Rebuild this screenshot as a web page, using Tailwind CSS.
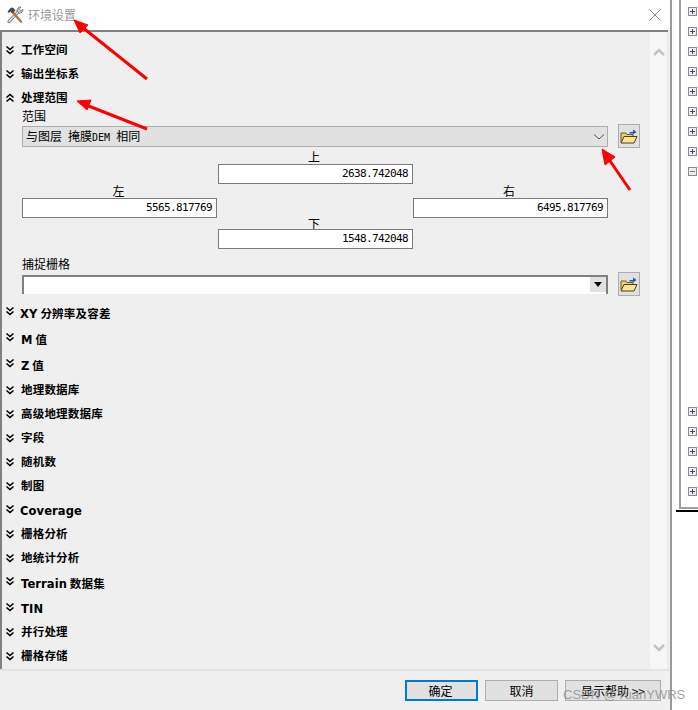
<!DOCTYPE html>
<html>
<head>
<meta charset="utf-8">
<script src="https://cdn.jsdelivr.net/npm/@tailwindcss/browser@4"></script>
</head>
<body class="bg-white">
<div class="relative flex w-[698px] h-[710px] overflow-hidden bg-white text-black text-[12px] font-['Noto_Sans_CJK_SC',sans-serif]">

  <!-- dialog -->
  <div class="flex flex-col w-[672px] h-[710px] border-r-2 border-[#9a9a9a] bg-[#f0f0f0]">
    <div class="flex items-center h-[30px] shrink-0 bg-white pl-[6px] pr-[9px]">
      <svg width="18" height="18" viewBox="0 0 18 18">
        <path d="M3 15.5 L12.5 5.5" stroke="#777" stroke-width="3.2" stroke-linecap="round"/>
        <path d="M3 15.5 L12.5 5.5" stroke="#e4e4e4" stroke-width="1.4" stroke-linecap="round"/>
        <path d="M11 5 A3.6 3.6 0 0 1 15 1 L13.2 3.4 L14.8 5 L17 3.2 A3.6 3.6 0 0 1 13 7.2 Z" fill="#cfcfcf" stroke="#666" stroke-width=".8"/>
        <path d="M6 5.5 L15 15.5" stroke="#b5763a" stroke-width="2.6" stroke-linecap="round"/>
        <path d="M1.5 5.5 L5 1.5 L7.5 2 L9.5 4.5 L6.5 7.5 L4.5 5.5 L3 7 Z" fill="#4a4a4a"/>
      </svg>
      <span class="ml-[4px] text-[#9a9a9a]">环境设置</span>
      <svg class="ml-auto" width="12" height="12" viewBox="0 0 12 12"><path d="M.5 .5 L11.5 11.5 M11.5 .5 L.5 11.5" stroke="#8a8a8a" stroke-width="1"/></svg>
    </div>

    <div class="flex flex-1 min-h-0 h-[638px] border-t-2 border-l-2 border-[#808080] border-b-0 mr-[2px] bg-[#efefef]">
      <div class="w-[648px] pt-[5px] pl-[3px]">
        <div class="flex items-center h-[24px] pt-[2px] gap-[5px] font-bold text-[11.5px] tracking-[.2px]"><svg width="10" height="10" viewBox="0 0 10 10"><path d="M1.5 1.5 L5 4.5 L8.5 1.5 M1.5 5.5 L5 8.5 L8.5 5.5" fill="none" stroke="#000" stroke-width="1.6"/></svg><span class="ml-[1px]">工作空间</span></div>
        <div class="flex items-center h-[24px] pt-[2px] gap-[5px] font-bold text-[11.5px] tracking-[.2px]"><svg width="10" height="10" viewBox="0 0 10 10"><path d="M1.5 1.5 L5 4.5 L8.5 1.5 M1.5 5.5 L5 8.5 L8.5 5.5" fill="none" stroke="#000" stroke-width="1.6"/></svg><span class="ml-[1px]">输出坐标系</span></div>
        <div class="flex items-center h-[24px] pt-[2px] gap-[5px] font-bold text-[11.5px] tracking-[.2px]"><svg width="10" height="10" viewBox="0 0 10 10"><path d="M1.5 4.5 L5 1.5 L8.5 4.5 M1.5 8.5 L5 5.5 L8.5 8.5" fill="none" stroke="#000" stroke-width="1.6"/></svg><span class="ml-[1px]">处理范围</span></div>

        <div class="pl-[17px]">
          <div class="h-[15px] leading-[13px]">范围</div>
          <div class="flex mt-[2px] h-[21px]">
            <div class="flex items-center justify-between w-[586px] h-[21px] border border-[#adadad] bg-[#e1e1e1] pb-[2px] pl-[3px] pr-[2px]">
              <span>与图层<span class="font-['DejaVu_Sans_Mono',monospace] text-[10px]">&nbsp;</span>掩膜<span class="font-['DejaVu_Sans_Mono',monospace] text-[10px]">DEM&nbsp;</span>相同</span>
              <svg class="mt-[2px]" width="12" height="8" viewBox="0 0 12 8"><path d="M1 1.5 L6 6 L11 1.5" fill="none" stroke="#555" stroke-width="1"/></svg>
            </div>
            <div class="flex items-center justify-center w-[22px] h-[24px] -mt-[2px] ml-[10px] border border-[#adadad] bg-[#e1e1e1]">
              <svg width="18" height="16" viewBox="0 0 18 16"><path d="M1 14 V5 H6 L7 6.5 H13 V8" fill="#e8cf7a" stroke="#6b5a22"/><path d="M1 15 L4 8.5 H17 L14 15 Z" fill="#f8e59a" stroke="#4f3f12"/><path d="M9.5 4 H13 V1.5 L16.5 4 L13 6.5 V5.5 H9.5 Z" fill="#1c5aa8"/></svg>
            </div>
          </div>

          <div class="grid grid-cols-[196px_195px_195px] mt-[3px]">
            <div></div>
            <div class="h-[14px] leading-[14px] text-center pr-[3px]">上</div>
            <div></div>
            <div></div>
            <div class="flex items-center justify-end w-[195px] h-[20px] border border-[#7a7a7a] bg-white pr-[4px] font-['DejaVu_Sans_Mono',monospace] text-[11px] tracking-[-.62px]">2638.742048</div>
            <div></div>
            <div class="h-[14px] leading-[14px] text-center pr-[3px]">左</div>
            <div></div>
            <div class="h-[14px] leading-[14px] text-center pr-[3px]">右</div>
            <div class="flex items-center justify-end w-[195px] h-[20px] border border-[#7a7a7a] bg-white pr-[4px] font-['DejaVu_Sans_Mono',monospace] text-[11px] tracking-[-.62px]">5565.817769</div>
            <div></div>
            <div class="flex items-center justify-end w-[195px] h-[20px] border border-[#7a7a7a] bg-white pr-[4px] font-['DejaVu_Sans_Mono',monospace] text-[11px] tracking-[-.62px]">6495.817769</div>
            <div></div>
            <div class="h-[11px] leading-[11px] text-center pr-[3px]">下</div>
            <div></div>
            <div></div>
            <div class="flex items-center justify-end w-[195px] h-[20px] border border-[#7a7a7a] bg-white pr-[4px] font-['DejaVu_Sans_Mono',monospace] text-[11px] tracking-[-.62px]">1548.742048</div>
            <div></div>
          </div>

          <div class="h-[14px] leading-[14px] mt-[8px]">捕捉栅格</div>
          <div class="flex mt-[4px] h-[20px]">
            <div class="flex justify-end w-[586px] h-[19px] border-t-2 border-l-2 border-r-2 border-[#808080] bg-white">
              <div class="flex items-center justify-center w-[16px] h-[15px] bg-[#e1e1e1]">
                <svg width="8" height="5" viewBox="0 0 8 5"><path d="M0 0 H8 L4 5 Z" fill="#000"/></svg>
              </div>
            </div>
            <div class="flex items-center justify-center w-[22px] h-[24px] -mt-[3px] ml-[10px] border border-[#adadad] bg-[#e1e1e1]">
              <svg width="18" height="16" viewBox="0 0 18 16"><path d="M1 14 V5 H6 L7 6.5 H13 V8" fill="#e8cf7a" stroke="#6b5a22"/><path d="M1 15 L4 8.5 H17 L14 15 Z" fill="#f8e59a" stroke="#4f3f12"/><path d="M9.5 4 H13 V1.5 L16.5 4 L13 6.5 V5.5 H9.5 Z" fill="#1c5aa8"/></svg>
            </div>
          </div>
        </div>

        <div class="flex items-start h-[26px] gap-[5px] mt-[4px] pt-[2px] leading-[24px] font-bold text-[11.5px] tracking-[.2px]"><svg class="mt-[5px]" width="10" height="10" viewBox="0 0 10 10"><path d="M1.5 1.5 L5 4.5 L8.5 1.5 M1.5 5.5 L5 8.5 L8.5 5.5" fill="none" stroke="#000" stroke-width="1.6"/></svg><span><span class="font-['DejaVu_Sans',sans-serif]">XY</span> 分辨率及容差</span></div>
        <div class="flex items-start h-[26px] gap-[5px] pt-[2px] leading-[24px] font-bold text-[11.5px] tracking-[.2px]"><svg class="mt-[5px]" width="10" height="10" viewBox="0 0 10 10"><path d="M1.5 1.5 L5 4.5 L8.5 1.5 M1.5 5.5 L5 8.5 L8.5 5.5" fill="none" stroke="#000" stroke-width="1.6"/></svg><span class="ml-[1px]"><span class="font-['DejaVu_Sans',sans-serif]">M</span> 值</span></div>
        <div class="flex items-start h-[26px] gap-[5px] pt-[2px] leading-[24px] font-bold text-[11.5px] tracking-[.2px]"><svg class="mt-[5px]" width="10" height="10" viewBox="0 0 10 10"><path d="M1.5 1.5 L5 4.5 L8.5 1.5 M1.5 5.5 L5 8.5 L8.5 5.5" fill="none" stroke="#000" stroke-width="1.6"/></svg><span class="ml-[1px]"><span class="font-['DejaVu_Sans',sans-serif]">Z</span> 值</span></div>
        <div class="flex items-center h-[24px] pt-[2px] gap-[5px] font-bold text-[11.5px] tracking-[.2px]"><svg width="10" height="10" viewBox="0 0 10 10"><path d="M1.5 1.5 L5 4.5 L8.5 1.5 M1.5 5.5 L5 8.5 L8.5 5.5" fill="none" stroke="#000" stroke-width="1.6"/></svg><span class="ml-[1px]">地理数据库</span></div>
        <div class="flex items-center h-[24px] pt-[2px] gap-[5px] font-bold text-[11.5px] tracking-[.2px]"><svg width="10" height="10" viewBox="0 0 10 10"><path d="M1.5 1.5 L5 4.5 L8.5 1.5 M1.5 5.5 L5 8.5 L8.5 5.5" fill="none" stroke="#000" stroke-width="1.6"/></svg><span class="ml-[1px]">高级地理数据库</span></div>
        <div class="flex items-center h-[24px] pt-[2px] gap-[5px] font-bold text-[11.5px] tracking-[.2px]"><svg width="10" height="10" viewBox="0 0 10 10"><path d="M1.5 1.5 L5 4.5 L8.5 1.5 M1.5 5.5 L5 8.5 L8.5 5.5" fill="none" stroke="#000" stroke-width="1.6"/></svg><span class="ml-[1px]">字段</span></div>
        <div class="flex items-center h-[24px] pt-[2px] gap-[5px] font-bold text-[11.5px] tracking-[.2px]"><svg width="10" height="10" viewBox="0 0 10 10"><path d="M1.5 1.5 L5 4.5 L8.5 1.5 M1.5 5.5 L5 8.5 L8.5 5.5" fill="none" stroke="#000" stroke-width="1.6"/></svg><span class="ml-[1px]">随机数</span></div>
        <div class="flex items-center h-[24px] pt-[2px] gap-[5px] font-bold text-[11.5px] tracking-[.2px]"><svg width="10" height="10" viewBox="0 0 10 10"><path d="M1.5 1.5 L5 4.5 L8.5 1.5 M1.5 5.5 L5 8.5 L8.5 5.5" fill="none" stroke="#000" stroke-width="1.6"/></svg><span class="ml-[1px]">制图</span></div>
        <div class="flex items-start h-[24px] gap-[5px] pt-[2px] leading-[24px] font-bold text-[11.5px] tracking-[.2px]"><svg class="mt-[5px]" width="10" height="10" viewBox="0 0 10 10"><path d="M1.5 1.5 L5 4.5 L8.5 1.5 M1.5 5.5 L5 8.5 L8.5 5.5" fill="none" stroke="#000" stroke-width="1.6"/></svg><span class="font-['DejaVu_Sans',sans-serif] text-[11.5px] tracking-[.1px]">Coverage</span></div>
        <div class="flex items-center h-[24px] pt-[2px] gap-[5px] font-bold text-[11.5px] tracking-[.2px]"><svg width="10" height="10" viewBox="0 0 10 10"><path d="M1.5 1.5 L5 4.5 L8.5 1.5 M1.5 5.5 L5 8.5 L8.5 5.5" fill="none" stroke="#000" stroke-width="1.6"/></svg><span class="ml-[1px]">栅格分析</span></div>
        <div class="flex items-center h-[24px] pt-[2px] gap-[5px] font-bold text-[11.5px] tracking-[.2px]"><svg width="10" height="10" viewBox="0 0 10 10"><path d="M1.5 1.5 L5 4.5 L8.5 1.5 M1.5 5.5 L5 8.5 L8.5 5.5" fill="none" stroke="#000" stroke-width="1.6"/></svg><span class="ml-[1px]">地统计分析</span></div>
        <div class="flex items-start h-[26px] gap-[5px] pt-[2px] leading-[24px] font-bold text-[11.5px] tracking-[.2px]"><svg class="mt-[5px]" width="10" height="10" viewBox="0 0 10 10"><path d="M1.5 1.5 L5 4.5 L8.5 1.5 M1.5 5.5 L5 8.5 L8.5 5.5" fill="none" stroke="#000" stroke-width="1.6"/></svg><span class="ml-[1px]"><span class="font-['DejaVu_Sans',sans-serif] tracking-[.1px]">Terrain</span> 数据集</span></div>
        <div class="flex items-start h-[24px] gap-[5px] pt-[2px] leading-[24px] font-bold text-[11.5px] tracking-[.2px]"><svg class="mt-[5px]" width="10" height="10" viewBox="0 0 10 10"><path d="M1.5 1.5 L5 4.5 L8.5 1.5 M1.5 5.5 L5 8.5 L8.5 5.5" fill="none" stroke="#000" stroke-width="1.6"/></svg><span class="ml-[1px] font-['DejaVu_Sans',sans-serif]">TIN</span></div>
        <div class="flex items-center h-[24px] pt-[2px] gap-[5px] font-bold text-[11.5px] tracking-[.2px]"><svg width="10" height="10" viewBox="0 0 10 10"><path d="M1.5 1.5 L5 4.5 L8.5 1.5 M1.5 5.5 L5 8.5 L8.5 5.5" fill="none" stroke="#000" stroke-width="1.6"/></svg><span class="ml-[1px]">并行处理</span></div>
        <div class="flex items-center h-[24px] pt-[2px] gap-[5px] font-bold text-[11.5px] tracking-[.2px]"><svg width="10" height="10" viewBox="0 0 10 10"><path d="M1.5 1.5 L5 4.5 L8.5 1.5 M1.5 5.5 L5 8.5 L8.5 5.5" fill="none" stroke="#000" stroke-width="1.6"/></svg><span class="ml-[1px]">栅格存储</span></div>
      </div>

      <!-- scrollbar -->
      <div class="flex flex-col justify-between w-[18px] pt-[16px] pb-[17px] items-center bg-[#f7f7f7] border-r border-[#e6e6e6]">
        <svg width="12" height="8" viewBox="0 0 12 8"><path d="M1 7 L6 2 L11 7" fill="none" stroke="#c4c4c4" stroke-width="2.6"/></svg>
        <svg width="12" height="8" viewBox="0 0 12 8"><path d="M1 1 L6 6 L11 1" fill="none" stroke="#c4c4c4" stroke-width="2.6"/></svg>
      </div>
    </div>

    <div class="flex items-start justify-end h-[41px] shrink-0 border-t-2 border-[#e4e4e4] bg-[#f0f0f0] pt-[9px] pr-[9px] gap-[7px]">
      <button class="w-[73px] h-[21px] border-2 border-[#0078d7] bg-[#e1e1e1] leading-none pr-[2px]">确定</button>
      <button class="w-[73px] h-[21px] border border-[#adadad] bg-[#e1e1e1] leading-none">取消</button>
      <button class="w-[96px] h-[21px] border border-[#adadad] bg-[#e1e1e1] leading-none">显示帮助 &gt;&gt;</button>
    </div>
  </div>

  <!-- tree behind the dialog -->
  <div class="w-[26px] h-[710px] bg-white">
    <div class="flex flex-col w-[26px] h-[509px] ml-[7px] border-l-2 border-b-2 border-[#a0a0a0] pt-[1px] pl-[7px]">
      <div class="flex items-center h-[20px]"><svg width="9" height="9" viewBox="0 0 9 9"><rect x=".5" y=".5" width="8" height="8" fill="#eee" stroke="#8a8a8a"/><path d="M2 4.5 H7 M4.5 2 V7" stroke="#2b4a8b"/></svg></div>
      <div class="flex items-center h-[20px]"><svg width="9" height="9" viewBox="0 0 9 9"><rect x=".5" y=".5" width="8" height="8" fill="#eee" stroke="#8a8a8a"/><path d="M2 4.5 H7 M4.5 2 V7" stroke="#2b4a8b"/></svg></div>
      <div class="flex items-center h-[20px]"><svg width="9" height="9" viewBox="0 0 9 9"><rect x=".5" y=".5" width="8" height="8" fill="#eee" stroke="#8a8a8a"/><path d="M2 4.5 H7 M4.5 2 V7" stroke="#2b4a8b"/></svg></div>
      <div class="flex items-center h-[20px]"><svg width="9" height="9" viewBox="0 0 9 9"><rect x=".5" y=".5" width="8" height="8" fill="#eee" stroke="#8a8a8a"/><path d="M2 4.5 H7 M4.5 2 V7" stroke="#2b4a8b"/></svg></div>
      <div class="flex items-center h-[20px]"><svg width="9" height="9" viewBox="0 0 9 9"><rect x=".5" y=".5" width="8" height="8" fill="#eee" stroke="#8a8a8a"/><path d="M2 4.5 H7 M4.5 2 V7" stroke="#2b4a8b"/></svg></div>
      <div class="flex items-center h-[20px]"><svg width="9" height="9" viewBox="0 0 9 9"><rect x=".5" y=".5" width="8" height="8" fill="#eee" stroke="#8a8a8a"/><path d="M2 4.5 H7 M4.5 2 V7" stroke="#2b4a8b"/></svg></div>
      <div class="flex items-center h-[20px]"><svg width="9" height="9" viewBox="0 0 9 9"><rect x=".5" y=".5" width="8" height="8" fill="#eee" stroke="#8a8a8a"/><path d="M2 4.5 H7 M4.5 2 V7" stroke="#2b4a8b"/></svg></div>
      <div class="flex items-center h-[20px]"><svg width="9" height="9" viewBox="0 0 9 9"><rect x=".5" y=".5" width="8" height="8" fill="#eee" stroke="#8a8a8a"/><path d="M2 4.5 H7 M4.5 2 V7" stroke="#2b4a8b"/></svg></div>
      <div class="flex items-center h-[20px]"><svg width="9" height="9" viewBox="0 0 9 9"><rect x=".5" y=".5" width="8" height="8" fill="#eee" stroke="#8a8a8a"/><path d="M2 4.5 H7" stroke="#777"/></svg></div>
      <div class="h-[220px]"></div>
      <div class="flex items-center h-[20px]"><svg width="9" height="9" viewBox="0 0 9 9"><rect x=".5" y=".5" width="8" height="8" fill="#eee" stroke="#8a8a8a"/><path d="M2 4.5 H7 M4.5 2 V7" stroke="#2b4a8b"/></svg></div>
      <div class="flex items-center h-[20px]"><svg width="9" height="9" viewBox="0 0 9 9"><rect x=".5" y=".5" width="8" height="8" fill="#eee" stroke="#8a8a8a"/><path d="M2 4.5 H7 M4.5 2 V7" stroke="#2b4a8b"/></svg></div>
      <div class="flex items-center h-[20px]"><svg width="9" height="9" viewBox="0 0 9 9"><rect x=".5" y=".5" width="8" height="8" fill="#eee" stroke="#8a8a8a"/><path d="M2 4.5 H7 M4.5 2 V7" stroke="#2b4a8b"/></svg></div>
      <div class="flex items-center h-[20px]"><svg width="9" height="9" viewBox="0 0 9 9"><rect x=".5" y=".5" width="8" height="8" fill="#eee" stroke="#8a8a8a"/><path d="M2 4.5 H7 M4.5 2 V7" stroke="#2b4a8b"/></svg></div>
      <div class="flex items-center h-[20px]"><svg width="9" height="9" viewBox="0 0 9 9"><rect x=".5" y=".5" width="8" height="8" fill="#eee" stroke="#8a8a8a"/><path d="M2 4.5 H7 M4.5 2 V7" stroke="#2b4a8b"/></svg></div>
    </div>
    <div class="h-[2px] ml-[4px] mt-[1px] bg-black"></div>
  </div>

  <!-- red annotation arrows -->
  <svg class="absolute left-0 top-0 pointer-events-none" width="698" height="710" viewBox="0 0 698 710">
    <g stroke="#f00" stroke-width="3" fill="#f00">
      <path d="M147 79 L82 27" fill="none"/>
      <path d="M74 20 L88 25 L80 33 Z" stroke-width="1"/>
      <path d="M147 129 L86 105" fill="none"/>
      <path d="M77 101 L91 100 L87 110 Z" stroke-width="1"/>
      <path d="M630 190 L608 158" fill="none"/>
      <path d="M602 149 L615 157 L605 165 Z" stroke-width="1"/>
    </g>
  </svg>

  <!-- watermark -->
  <div class="absolute left-[563px] top-[686px] text-[13px] leading-[18px] text-[#8c8c8c]/80 font-['Liberation_Sans',sans-serif] whitespace-nowrap">CSDN @YuanYWRS</div>
</div>
</body>
</html>
